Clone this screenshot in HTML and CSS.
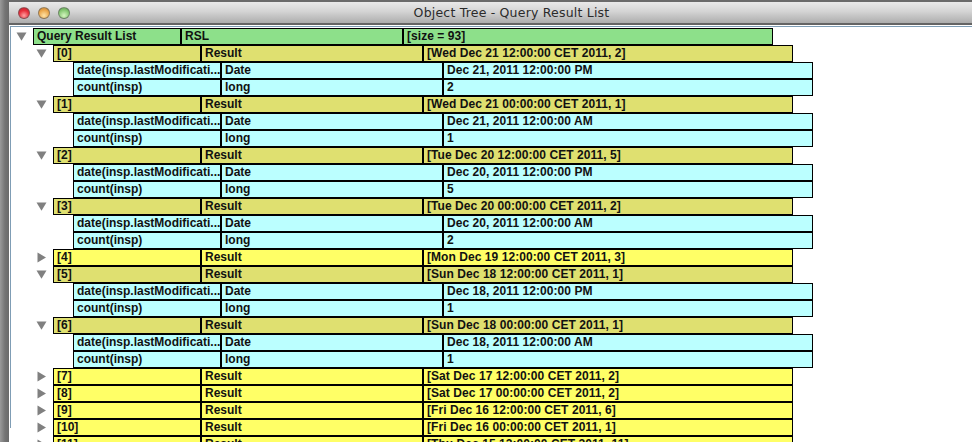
FILE: index.html
```html
<!DOCTYPE html>
<html lang="en">
<head>
<meta charset="utf-8">
<title>Object Tree - Query Result List</title>
<link rel="stylesheet" href="styles.css">
</head>
<body>
<svg class="defs" width="0" height="0" aria-hidden="true">
  <symbol id="open" viewBox="0 0 11 9"><path d="M0.5 0.5H10.5L5.5 8.8Z"/></symbol>
  <symbol id="closed" viewBox="0 0 11 11"><path d="M1.5 0.5V10.5L10 5.5Z"/></symbol>
</svg>
<div class="window">
  <header class="titlebar">
    <div class="lights"><span class="light red"></span><span class="light orange"></span><span class="light green"></span></div>
    <div class="title">Object Tree - Query Result List</div>
  </header>
  <main class="tree">
    <div class="node root"><svg class="arrow"><use href="#open"/></svg><div class="row root-row"><span class="cell">Query Result List</span><span class="cell">RSL</span><span class="cell">[size = 93]</span></div></div>

    <div class="node item"><svg class="arrow"><use href="#open"/></svg><div class="row open-row"><span class="cell">[0]</span><span class="cell">Result</span><span class="cell">[Wed Dec 21 12:00:00 CET 2011, 2]</span></div></div>
    <div class="row leaf"><span class="cell">date(insp.lastModificati...</span><span class="cell">Date</span><span class="cell">Dec 21, 2011 12:00:00 PM</span></div>
    <div class="row leaf"><span class="cell">count(insp)</span><span class="cell">long</span><span class="cell">2</span></div>

    <div class="node item"><svg class="arrow"><use href="#open"/></svg><div class="row open-row"><span class="cell">[1]</span><span class="cell">Result</span><span class="cell">[Wed Dec 21 00:00:00 CET 2011, 1]</span></div></div>
    <div class="row leaf"><span class="cell">date(insp.lastModificati...</span><span class="cell">Date</span><span class="cell">Dec 21, 2011 12:00:00 AM</span></div>
    <div class="row leaf"><span class="cell">count(insp)</span><span class="cell">long</span><span class="cell">1</span></div>

    <div class="node item"><svg class="arrow"><use href="#open"/></svg><div class="row open-row"><span class="cell">[2]</span><span class="cell">Result</span><span class="cell">[Tue Dec 20 12:00:00 CET 2011, 5]</span></div></div>
    <div class="row leaf"><span class="cell">date(insp.lastModificati...</span><span class="cell">Date</span><span class="cell">Dec 20, 2011 12:00:00 PM</span></div>
    <div class="row leaf"><span class="cell">count(insp)</span><span class="cell">long</span><span class="cell">5</span></div>

    <div class="node item"><svg class="arrow"><use href="#open"/></svg><div class="row open-row"><span class="cell">[3]</span><span class="cell">Result</span><span class="cell">[Tue Dec 20 00:00:00 CET 2011, 2]</span></div></div>
    <div class="row leaf"><span class="cell">date(insp.lastModificati...</span><span class="cell">Date</span><span class="cell">Dec 20, 2011 12:00:00 AM</span></div>
    <div class="row leaf"><span class="cell">count(insp)</span><span class="cell">long</span><span class="cell">2</span></div>

    <div class="node item"><svg class="arrow shut"><use href="#closed"/></svg><div class="row shut-row"><span class="cell">[4]</span><span class="cell">Result</span><span class="cell">[Mon Dec 19 12:00:00 CET 2011, 3]</span></div></div>

    <div class="node item"><svg class="arrow"><use href="#open"/></svg><div class="row open-row"><span class="cell">[5]</span><span class="cell">Result</span><span class="cell">[Sun Dec 18 12:00:00 CET 2011, 1]</span></div></div>
    <div class="row leaf"><span class="cell">date(insp.lastModificati...</span><span class="cell">Date</span><span class="cell">Dec 18, 2011 12:00:00 PM</span></div>
    <div class="row leaf"><span class="cell">count(insp)</span><span class="cell">long</span><span class="cell">1</span></div>

    <div class="node item"><svg class="arrow"><use href="#open"/></svg><div class="row open-row"><span class="cell">[6]</span><span class="cell">Result</span><span class="cell">[Sun Dec 18 00:00:00 CET 2011, 1]</span></div></div>
    <div class="row leaf"><span class="cell">date(insp.lastModificati...</span><span class="cell">Date</span><span class="cell">Dec 18, 2011 12:00:00 AM</span></div>
    <div class="row leaf"><span class="cell">count(insp)</span><span class="cell">long</span><span class="cell">1</span></div>

    <div class="node item"><svg class="arrow shut"><use href="#closed"/></svg><div class="row shut-row"><span class="cell">[7]</span><span class="cell">Result</span><span class="cell">[Sat Dec 17 12:00:00 CET 2011, 2]</span></div></div>
    <div class="node item"><svg class="arrow shut"><use href="#closed"/></svg><div class="row shut-row"><span class="cell">[8]</span><span class="cell">Result</span><span class="cell">[Sat Dec 17 00:00:00 CET 2011, 2]</span></div></div>
    <div class="node item"><svg class="arrow shut"><use href="#closed"/></svg><div class="row shut-row"><span class="cell">[9]</span><span class="cell">Result</span><span class="cell">[Fri Dec 16 12:00:00 CET 2011, 6]</span></div></div>
    <div class="node item"><svg class="arrow shut"><use href="#closed"/></svg><div class="row shut-row"><span class="cell">[10]</span><span class="cell">Result</span><span class="cell">[Fri Dec 16 00:00:00 CET 2011, 1]</span></div></div>
    <div class="node item"><svg class="arrow shut"><use href="#closed"/></svg><div class="row shut-row"><span class="cell">[11]</span><span class="cell">Result</span><span class="cell">[Thu Dec 15 12:00:00 CET 2011, 11]</span></div></div>
  </main>
</div>
</body>
</html>
```

FILE: styles.css
```css
html, body {
  margin: 0;
  height: 442px;
  overflow: hidden;
}

body {
  background: linear-gradient(to right, #9a9a9a 0, #747474 5px, #6a6a6a 9px);
  padding: 2px 0 0 9px;
  box-sizing: border-box;
  font-family: "Liberation Sans", Arial, sans-serif;
}

.defs {
  display: block;
  height: 0;
}

.window {
  width: 1005px;
  height: 440px;
  background: #fff;
  overflow: hidden;
}

.titlebar {
  display: flex;
  align-items: center;
  height: 21px;
  background: linear-gradient(to bottom, #e9e9e9, #d4d4d4 45%, #adadad);
  border-bottom: 2px solid #646464;
  padding-left: 9px;
}

.lights {
  display: flex;
  gap: 8px;
  width: 52px;
}

.light {
  width: 12px;
  height: 12px;
  border-radius: 50%;
  box-sizing: border-box;
  border: 1px solid rgba(90, 90, 90, 0.6);
}

.red { background: radial-gradient(circle at 50% 75%, #ffa3a3, #e8303c 55%, #b5202a); }
.orange { background: radial-gradient(circle at 50% 75%, #ffe3a6, #eba64a 60%, #b87f36); }
.green { background: radial-gradient(circle at 50% 75%, #d5f5c0, #86c873 60%, #5d9652); }

.title {
  flex: 1;
  text-align: center;
  padding-right: 61px;
  font-family: "DejaVu Sans", sans-serif;
  font-size: 12.5px;
  letter-spacing: 0.2px;
  color: #2b2b2b;
}

.tree {
  border-top: 1px solid #fff;
  border-left: 1px solid #fff;
  box-shadow: inset 1px 0 0 #7f9db5;
  padding-top: 2px;
  height: 400px;
  position: relative;
}

.tree::before {
  content: "";
  position: absolute;
  left: 0;
  right: 0;
  top: 0;
  height: 1px;
  background: #7f9db5;
}

.node {
  display: flex;
  align-items: center;
}

.root { padding-left: 6px; }
.item { padding-left: 26px; }

.arrow {
  width: 11px;
  height: 9px;
  margin-right: 6px;
  fill: #808080;
  flex: none;
}

.arrow.shut {
  height: 11px;
}

.row {
  display: grid;
  grid-template-columns: 148px 222px 370px;
  width: 740px;
  height: 17px;
  color: #111;
  font-size: 12px;
  font-weight: bold;
  line-height: 15px;
  flex: none;
}

.cell {
  border: 1px solid #000;
  padding-left: 3px;
  white-space: nowrap;
  overflow: hidden;
}

.cell:last-child {
  letter-spacing: 0.06px;
}

.root-row { background: #8de08a; }
.open-row { background: #dfe070; }
.shut-row { background: #ffff66; }
.leaf {
  background: #bbffff;
  margin-left: 63px;
}
```
